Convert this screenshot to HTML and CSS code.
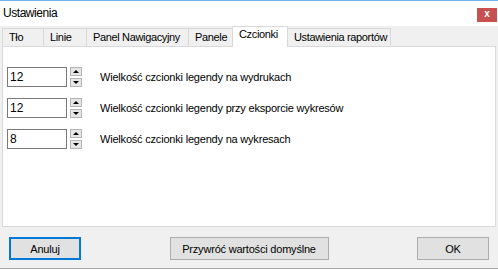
FILE: index.html
```html
<!DOCTYPE html>
<html>
    <head>
        <title>Ustawienia</title>
        <link rel="stylesheet" href="styles.css">
    </head>
    <body>
        <div class="window">
            <div class="titlebar">
                <span class="title">Ustawienia</span>
                <span class="close">x</span>
            </div>

            <div class="tabs">
                <div class="tab">Tło</div>
                <div class="tab">Linie</div>
                <div class="tab">Panel Nawigacyjny</div>
                <div class="tab">Panele</div>
                <div class="tab active">Czcionki</div>
                <div class="tab">Ustawienia raportów</div>
            </div>

            <div class="panel">
                <div class="row">
                    <div class="spin">
                        <div class="spin-value">12</div>
                        <div class="spin-buttons">
                            <span class="spin-btn up"></span>
                            <span class="spin-btn down"></span>
                        </div>
                    </div>
                    <label>Wielkość czcionki legendy na wydrukach</label>
                </div>
                <div class="row">
                    <div class="spin">
                        <div class="spin-value">12</div>
                        <div class="spin-buttons">
                            <span class="spin-btn up"></span>
                            <span class="spin-btn down"></span>
                        </div>
                    </div>
                    <label>Wielkość czcionki legendy przy eksporcie wykresów</label>
                </div>
                <div class="row">
                    <div class="spin">
                        <div class="spin-value">8</div>
                        <div class="spin-buttons">
                            <span class="spin-btn up"></span>
                            <span class="spin-btn down"></span>
                        </div>
                    </div>
                    <label>Wielkość czcionki legendy na wykresach</label>
                </div>
            </div>

            <div class="footer">
                <button class="btn default">Anuluj</button>
                <button class="btn wide">Przywróć wartości domyślne</button>
                <button class="btn">OK</button>
            </div>
        </div>
    </body>
</html>
```

FILE: styles.css
```css
/* dialog frame */
body {
    margin: 0;
    background: #f0f0f0;
    font-family: "Liberation Sans", Arial, sans-serif;
    font-size: 11px;
    color: #000;
}

.window {
    width: 498px;
    height: 269px;
    box-sizing: border-box;
    border-bottom: 1px solid #a8a8a8;
    background: #f0f0f0;
}

.titlebar {
    display: flex;
    justify-content: space-between;
    align-items: flex-start;
    height: 26px;
    box-sizing: border-box;
    border-top: 1px solid #74b2ea;
    background: #fff;
}

.title {
    font-size: 12px;
    letter-spacing: -0.45px;
    margin: 5px 0 0 3px;
}

.close {
    width: 20px;
    height: 14px;
    margin: 7px 1px 0 0;
    background: #c75050;
    color: #fff;
    font-weight: bold;
    font-size: 10px;
    line-height: 12px;
    text-align: center;
}

/* tab strip */
.tabs {
    display: flex;
    align-items: flex-end;
    height: 20px;
    padding-left: 2px;
}

.tab {
    height: 18px;
    box-sizing: border-box;
    padding: 0 0 0 6px;
    margin-right: -1px;
    border: 1px solid #d9d9d9;
    border-bottom: none;
    background: #f0f0f0;
    line-height: 17px;
    letter-spacing: -0.35px;
    white-space: nowrap;
}

/* widths of the native control */
.tab:nth-child(1) { width: 42px; }
.tab:nth-child(2) { width: 44px; }
.tab:nth-child(3) { width: 103px; }
.tab:nth-child(4) { width: 45px; }
.tab:nth-child(5) { width: 56px; }
.tab:nth-child(6) { width: 104px; }

.tab.active {
    position: relative;
    z-index: 1;
    height: 21px;
    bottom: -1px;
    background: #fff;
    line-height: 15px;
}

/* content */
.panel {
    height: 181px;
    margin: 0 2px 0 2px;
    box-sizing: border-box;
    border: 1px solid #d9d9d9;
    background: #fff;
    padding: 20px 0 0 4px;
    display: flex;
    flex-direction: column;
    gap: 11px;
}

.row {
    display: flex;
    align-items: center;
}

.spin {
    display: flex;
    gap: 3px;
}

.spin-value {
    width: 60px;
    height: 20px;
    box-sizing: border-box;
    border: 1px solid #7a7a7a;
    padding-left: 2px;
    font-size: 12px;
    line-height: 18px;
}

.spin-buttons {
    display: flex;
    flex-direction: column;
    justify-content: space-between;
    height: 20px;
}

.spin-btn {
    display: flex;
    justify-content: center;
    align-items: center;
    width: 12px;
    height: 9px;
    box-sizing: border-box;
    border: 1px solid #b4b4b4;
    background: #e6e6e6;
}

.spin-btn::after {
    content: "";
    border-left: 3px solid transparent;
    border-right: 3px solid transparent;
}

.spin-btn.up::after {
    border-bottom: 3px solid #000;
}

.spin-btn.down::after {
    border-top: 3px solid #000;
}

label {
    margin-left: 18px;
    letter-spacing: -0.2px;
}

/* buttons */
.footer {
    display: flex;
    justify-content: space-between;
    padding: 10px 9px 0 9px;
}

.btn {
    width: 72px;
    height: 23px;
    border: 1px solid #adadad;
    background: #e1e1e1;
    font-family: "Liberation Sans", Arial, sans-serif;
    font-size: 11px;
    letter-spacing: -0.2px;
    color: #000;
    padding: 0;
}

.btn.wide {
    width: 159px;
}

.btn.default {
    border: 2px solid #0078d7;
}
```
